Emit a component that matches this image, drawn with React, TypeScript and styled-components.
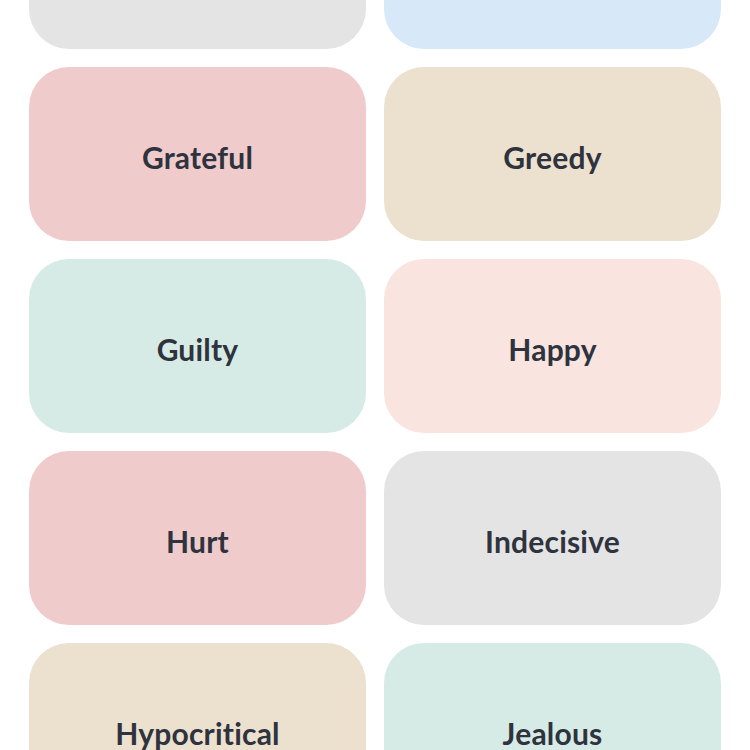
import React from 'react';
import styled, { createGlobalStyle } from 'styled-components';

const GlobalStyle = createGlobalStyle`
  html, body {
    margin: 0;
    padding: 0;
    background: #ffffff;
    overflow: hidden;
  }
  body {
    font-family: Lato, "Open Sans", "Noto Sans", sans-serif;
  }
`;

const Page = styled.div`
  width: 750px;
  height: 750px;
  overflow: hidden;
`;

const Grid = styled.div`
  display: grid;
  grid-template-columns: repeat(2, 337px);
  column-gap: 18px;
  row-gap: 18px;
  padding: 0 29px;
  margin-top: -125px;
`;

const Card = styled.div<{ $bg: string }>`
  height: 174px;
  box-sizing: border-box;
  padding-top: 5px;
  border-radius: 40px;
  background: ${p => p.$bg};
  display: flex;
  align-items: center;
  justify-content: center;
  font-size: 30px;
  font-weight: 700;
  color: #2e333d;
  letter-spacing: 0.2px;
`;

const feelings: { label: string; bg: string }[] = [
  { label: 'Frustrated', bg: '#e4e4e4' },
  { label: 'Goofy', bg: '#d7e9f8' },
  { label: 'Grateful', bg: '#f0cbcc' },
  { label: 'Greedy', bg: '#ece0cf' },
  { label: 'Guilty', bg: '#d7ebe6' },
  { label: 'Happy', bg: '#f9e4df' },
  { label: 'Hurt', bg: '#f0cbcc' },
  { label: 'Indecisive', bg: '#e4e4e4' },
  { label: 'Hypocritical', bg: '#ece0cf' },
  { label: 'Jealous', bg: '#d7ebe6' },
];

const App: React.FC = () => (
  <>
    <GlobalStyle />
    <Page>
      <Grid>
        {feelings.map(f => (
          <Card key={f.label} $bg={f.bg}>
            {f.label}
          </Card>
        ))}
      </Grid>
    </Page>
  </>
);

export default App;
